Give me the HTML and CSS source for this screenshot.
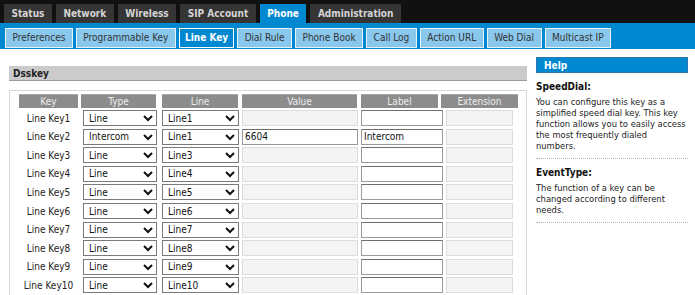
FILE: index.html
```html
<!DOCTYPE html>
<html lang="en">
<head>
<meta charset="UTF-8" />
<meta name="viewport" content="width=device-width, initial-scale=1" />
<title>Phone - Line Key</title>
<link rel="stylesheet" href="styles.css">
</head>
<body>

<div class="topnav">
    <a class="tab">Status</a>
    <a class="tab">Network</a>
    <a class="tab">Wireless</a>
    <a class="tab">SIP Account</a>
    <a class="tab active">Phone</a>
    <a class="tab">Administration</a>
</div>

<div class="subnav">
    <a class="subtab">Preferences</a>
    <a class="subtab">Programmable Key</a>
    <a class="subtab active">Line Key</a>
    <a class="subtab">Dial Rule</a>
    <a class="subtab">Phone Book</a>
    <a class="subtab">Call Log</a>
    <a class="subtab">Action URL</a>
    <a class="subtab">Web Dial</a>
    <a class="subtab">Multicast IP</a>
</div>

<div class="page">
    <div class="main">
        <div class="section-title">Dsskey</div>
        <div class="panel">
            <div class="head-row">
                <div class="th th-key">Key</div>
                <div class="th th-type">Type</div>
                <div class="th th-line">Line</div>
                <div class="th th-value">Value</div>
                <div class="th th-label">Label</div>
                <div class="th th-ext">Extension</div>
            </div>
            <div class="rows" id="rows"></div>
        </div>
    </div>

    <aside class="help">
        <div class="help-title">Help</div>
        <div class="help-item">
            <div class="help-name">SpeedDial:</div>
            <p>You can configure this key as a simplified speed dial key. This key function allows you to easily access the most frequently dialed numbers.</p>
        </div>
        <div class="help-item">
            <div class="help-name">EventType:</div>
            <p>The function of a key can be changed according to different needs.</p>
        </div>
    </aside>
</div>

<script>
    const keys = [];
    for (let i = 1; i <= 10; i++) {
        keys.push({ name: "Line Key" + i, type: "Line", line: "Line" + i, value: "", label: "" });
    }
    // ikinci tuş intercom olarak ayarlı
    keys[1].type = "Intercom";
    keys[1].line = "Line1";
    keys[1].value = "6604";
    keys[1].label = "Intercom";

    const types = ["N/A", "Line", "Intercom", "Speed Dial", "BLF"];

    function selectHtml(cls, options, current) {
        let html = '<select class="' + cls + '">';
        options.forEach(o => {
            html += '<option' + (o === current ? ' selected' : '') + '>' + o + '</option>';
        });
        return html + '</select>';
    }

    const lines = [];
    for (let i = 1; i <= 10; i++) lines.push("Line" + i);

    let out = "";
    keys.forEach(k => {
        const active = k.type === "Intercom";
        out += '<div class="row">';
        out += '<div class="key-name">' + k.name + '</div>';
        out += selectHtml("sel-type", types, k.type);
        out += selectHtml("sel-line", lines, k.line);
        out += '<input class="in-value" type="text" value="' + k.value + '"' + (active ? '' : ' disabled') + '>';
        out += '<input class="in-label" type="text" value="' + k.label + '">';
        out += '<input class="in-ext" type="text" disabled>';
        out += '</div>';
    });
    document.getElementById("rows").innerHTML = out;
</script>

</body>
</html>
```

FILE: styles.css
```css
body {
margin: 0;
background: #fff;
color: #222;
font-family: 'DejaVu Sans Condensed', 'DejaVu Sans', sans-serif;
font-size: 10px;
overflow: hidden;
}

/* üst menü */
.topnav {
background: #111;
height: 23px;
display: flex;
align-items: flex-end;
gap: 4px;
padding-left: 4px;
}

.tab {
background: #353535;
color: #d4d4d4;
font-weight: bold;
height: 19px;
line-height: 20px;
padding: 0 7.5px;
box-sizing: border-box;
}

.tab.active {
background: #0088d1;
color: #fff;
}

.subnav {
background: #0088d1;
height: 26px;
display: flex;
align-items: flex-start;
gap: 3px;
padding: 5px 0 0 5px;
box-sizing: border-box;
}

.subtab {
background: #89c7ec;
border: 1px solid #e4f2fb;
color: #333;
height: 20px;
line-height: 18px;
padding: 0 6.5px;
box-sizing: border-box;
}

.subtab.active {
background: #0088d1;
border-color: #fff;
color: #fff;
font-weight: bold;
padding: 0 5px;
}

.page {
display: flex;
align-items: flex-start;
gap: 9px;
padding: 8px 0 0 9px;
}

.main {
width: 518px;
margin-top: 9px;
}

.section-title {
background: #cbcbcb;
border-bottom: 1px solid #9a9a9a;
height: 14px;
line-height: 15px;
padding-left: 4px;
font-weight: bold;
color: #222;
}

.panel {
margin-top: 9px;
border: 1px solid #d8d8d8;
border-bottom: none;
padding: 3px 0 20px 9px;
}

.head-row {
display: grid;
grid-template-columns: 62px 81px 80px 119px 80px 77px;
height: 13px;
margin-bottom: 2px;
}

.th {
background: #8c8c8c;
color: #ececec;
text-align: center;
line-height: 13px;
border-top: 1px solid #a8a8a8;
box-sizing: border-box;
}

.th-key { width: 59px; }
.th-type { width: 75px; }
.th-line { width: 76px; }
.th-value { width: 115px; }
.th-label { width: 77px; }
.th-ext { width: 77px; }

.row {
display: grid;
grid-template-columns: 64px 79px 80px 119px 85px 67px;
height: 18.55px;
align-items: center;
}

.key-name {
text-align: center;
padding-right: 5px;
color: #222;
}

select, input {
font-family: 'DejaVu Sans Condensed', 'DejaVu Sans', sans-serif;
font-size: 10px;
height: 16px;
box-sizing: border-box;
margin: 0;
color: #111;
}

select {
border: 1px solid #7a7a7a;
border-radius: 0;
padding: 0 0 0 1px;
background: #fff;
}

.sel-type { width: 74px; }
.sel-line { width: 77px; }

input {
padding: 0 2px;
border: 1px solid #9a9a9a;
border-top-color: #6e6e6e;
background: #fff;
}

input:disabled {
background: #f4f4f4;
border: 1px solid #dcdcdc;
}

.in-value { width: 116px; }
.in-label { width: 82px; }
.in-ext { width: 67px; }

.help {
width: 152px;
}

.help-title {
background: #0088d1;
border: 1px solid #2b78b0;
color: #fff;
font-weight: bold;
height: 16px;
line-height: 15px;
padding-left: 7px;
box-sizing: border-box;
}

.help-item {
padding: 8px 0 7px;
border-bottom: 1px dotted #b5b5b5;
}

.help-item:first-of-type {
padding-top: 9px;
}

.help-name {
font-weight: bold;
color: #111;
line-height: 12px;
margin-bottom: 3px;
}

.help-item p {
margin: 0;
font-size: 9.3px;
line-height: 11px;
color: #222;
}
```
